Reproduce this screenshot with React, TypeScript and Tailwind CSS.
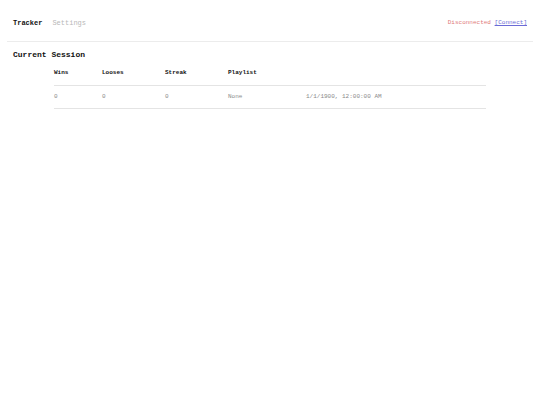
export default function App() {
  const mono = { fontFamily: '"Liberation Mono", "Courier New", monospace' };
  return (
    <div className="min-h-screen bg-white text-black" style={mono}>
      <nav className="mx-[7px] flex items-center justify-between border-b border-[#ececec] px-[6px] pt-[19px] pb-[14px] leading-[8px]">
        <div className="flex items-center gap-[10px] text-[7px]">
          <span className="font-bold text-[#111]">Tracker</span>
          <span className="text-[#b8b8b8]">Settings</span>
        </div>
        <div className="text-[6px]">
          <span className="text-[#e07a7a]">Disconnected</span>{" "}
          <span className="text-[#6b6bd6] underline">[Connect]</span>
        </div>
      </nav>
      <h1 className="mt-[9px] px-[13px] text-[8px] leading-[8px] font-bold text-[#111]">Current Session</h1>
      <table className="mx-auto mt-[2px] w-[80%] border-collapse text-left text-[6px] leading-[6px]">
        <thead>
          <tr className="border-b border-[#e4e4e4] text-[#111]">
            <th className="w-[48px] py-[9px] font-bold">Wins</th>
            <th className="w-[63px] py-[9px] font-bold">Looses</th>
            <th className="w-[63px] py-[9px] font-bold">Streak</th>
            <th className="w-[78px] py-[9px] font-bold">Playlist</th>
            <th className="py-[9px]"></th>
          </tr>
        </thead>
        <tbody className="text-[#8a8a8a]">
          <tr className="border-b border-[#e4e4e4]">
            <td className="py-[8px]">0</td>
            <td className="py-[8px]">0</td>
            <td className="py-[8px]">0</td>
            <td className="py-[8px]">None</td>
            <td className="py-[8px]">1/1/1900, 12:00:00 AM</td>
          </tr>
        </tbody>
      </table>
    </div>
  );
}
